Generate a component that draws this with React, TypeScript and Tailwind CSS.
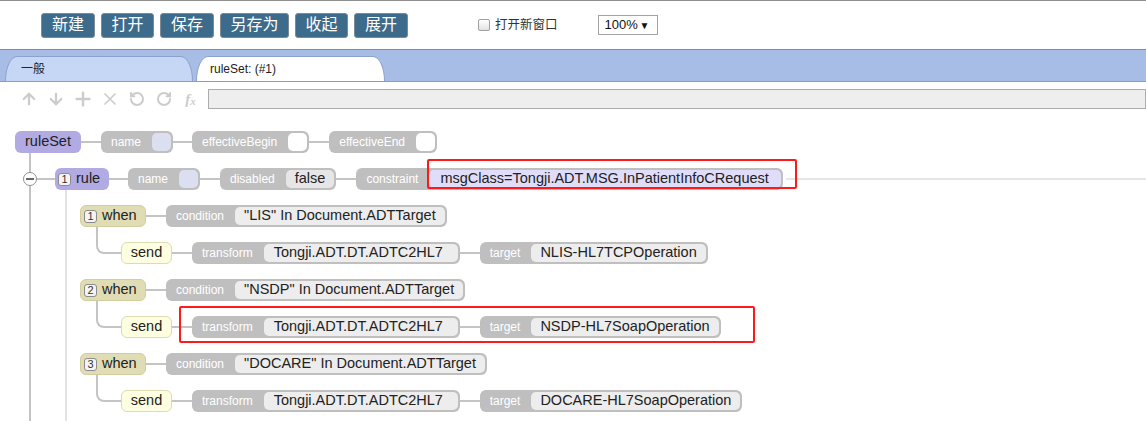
import { ArrowDown, ArrowUp, Plus, RotateCcw, RotateCw, X } from 'lucide-react'
import clsx from 'clsx'

type Tone = 'gray' | 'light' | 'lav' | 'white' | 'slate'

const toneClass: Record<Tone, string> = {
  gray: 'bg-[#ededed]',
  light: 'bg-[#e6e6e6]',
  lav: 'bg-[#e0ddfa]',
  white: 'bg-white',
  slate: 'bg-[#dcdff0]',
}

const buttons = [
  { label: '新建', w: 'w-[54px]' },
  { label: '打开', w: 'w-[53px]' },
  { label: '保存', w: 'w-[54px]' },
  { label: '另存为', w: 'w-[69px]' },
  { label: '收起', w: 'w-[53px]' },
  { label: '展开', w: 'w-[54px]' },
]

const whens = [
  { n: 1, cond: '"LIS" In Document.ADTTarget', target: 'NLIS-HL7TCPOperation' },
  { n: 2, cond: '"NSDP" In Document.ADTTarget', target: 'NSDP-HL7SoapOperation', marked: true },
  { n: 3, cond: '"DOCARE" In Document.ADTTarget', target: 'DOCARE-HL7SoapOperation' },
]

function Field({
  label,
  value,
  tone = 'gray',
  vw,
}: {
  label: string
  value?: string
  tone?: Tone
  vw?: string
}) {
  return (
    <div className="flex h-[22px] shrink-0 items-stretch rounded-[6px] bg-[#bfbfbf] p-[2px]">
      <span className="flex items-center pl-[8px] pr-[11px] text-[12px] text-white">{label}</span>
      <span
        className={clsx(
          'flex items-center whitespace-nowrap rounded-[5px] text-[14.5px] text-[#222]',
          toneClass[tone],
          value ? 'px-[9px]' : 'w-[19px]',
          vw,
        )}
      >
        {value}
      </span>
    </div>
  )
}

function Wire({ w = 'w-5' }: { w?: string }) {
  return <div className={clsx('h-[2px] shrink-0 bg-[#c4c4c4]', w)} />
}

function Badge({ n }: { n: number }) {
  return (
    <span className="flex h-[13px] w-[13px] items-center justify-center rounded-[3px] border border-[#8c8c8c] bg-[#f4f4f4] text-[11px] leading-none text-[#333]">
      {n}
    </span>
  )
}

export default function App() {
  return (
    <div className="h-[421px] w-[1146px] overflow-hidden bg-white font-['Liberation_Sans','Noto_Sans_CJK_SC',sans-serif] text-[#222]">
      {/* top bar */}
      <div className="flex h-[49px] items-center border-t border-[#8f8f8f] pl-[41px]">
        <div className="flex gap-[6px]">
          {buttons.map((b) => (
            <button
              key={b.label}
              className={clsx(
                'flex h-[25px] items-center justify-center rounded-[3px] border border-[#7d8a94] bg-[#3c6b8b] text-[16px] text-white',
                b.w,
              )}
            >
              {b.label}
            </button>
          ))}
        </div>
        <label className="ml-[70px] flex items-center gap-[5px] text-[12.5px] text-[#333]">
          <span className="h-[12px] w-[12px] rounded-[2px] border border-[#a0a0a0] bg-gradient-to-b from-white to-[#e2e2e2]" />
          打开新窗口
        </label>
        <div className="ml-[40px] flex h-[20px] w-[60px] items-center justify-between border border-[#a3a3a3] bg-white pl-[6px] pr-[7px] text-[13px] text-[#111]">
          <span>100%</span>
          <span className="text-[10px]">▼</span>
        </div>
      </div>

      {/* tabs */}
      <div className="flex h-[33px] items-end gap-[3px] border-y border-t-[#8a8a8a] border-b-[#9c9c9c] bg-[#a7bde6] pl-[5px]">
        <div className="flex h-[25px] w-[188px] items-center rounded-tl-[12px_25px] rounded-tr-[12px_25px] border border-b-0 border-[#8ca2cb] bg-[#c5d7f5] pl-[15px] text-[12px]">
          一般
        </div>
        <div className="flex h-[25px] w-[189px] items-center rounded-tl-[12px_25px] rounded-tr-[12px_25px] border border-b-0 border-[#8ca2cb] bg-white pl-[13px] text-[12px]">
          ruleSet: (#1)
        </div>
      </div>

      {/* toolbar */}
      <div className="mt-[7px] flex h-[20px] items-center pl-[15px] text-[#cccccc]">
        <span className="flex w-[27px] justify-center"><ArrowUp size={18} strokeWidth={3} /></span>
        <span className="flex w-[27px] justify-center"><ArrowDown size={18} strokeWidth={3} /></span>
        <span className="flex w-[27px] justify-center"><Plus size={22} strokeWidth={2.6} /></span>
        <span className="flex w-[27px] justify-center"><X size={20} strokeWidth={2} /></span>
        <span className="flex w-[27px] justify-center"><RotateCcw size={16} strokeWidth={3} /></span>
        <span className="flex w-[27px] justify-center"><RotateCw size={16} strokeWidth={3} /></span>
        <span className="flex w-[27px] items-end justify-center font-['Liberation_Serif',serif] text-[15px] font-bold italic leading-none">
          f<span className="text-[11px]">x</span>
        </span>
        <div className="ml-[4px] h-[20px] flex-1 border border-[#acacac] bg-[#eeeeee]" />
      </div>

      {/* tree */}
      <div className="mt-[22px] pl-[15px]">
        <div className="flex h-[22px] items-center">
          <div className="flex h-[22px] w-[66px] items-center justify-center rounded-[6px] bg-[#b1aae3] text-[14.5px]">
            ruleSet
          </div>
          <Wire />
          <Field label="name" tone="slate" />
          <Wire w="w-[19px]" />
          <Field label="effectiveBegin" tone="white" />
          <Wire />
          <Field label="effectiveEnd" tone="white" />
        </div>

        <div className="ml-[14px] border-l-2 border-[#c3c3c3] pt-[15px]">
          <div className="flex h-[22px] items-center">
            <span className="-ml-[8px] flex h-[14px] w-[14px] shrink-0 items-center justify-center rounded-full border border-[#8f8f8f] bg-white">
              <span className="h-[2px] w-[8px] bg-[#666]" />
            </span>
            <Wire w="w-[18px]" />
            <div className="flex h-[22px] w-[54px] shrink-0 items-center gap-[5px] rounded-[6px] bg-[#b1aae3] pl-[3px] text-[14.5px]">
              <Badge n={1} />
              rule
            </div>
            <Wire w="w-[19px]" />
            <Field label="name" tone="slate" />
            <Wire />
            <Field label="disabled" value="false" tone="light" />
            <Wire />
            <div className="relative shrink-0">
              <Field
                label="constraint"
                value="msgClass=Tongji.ADT.MSG.InPatientInfoCRequest"
                tone="lav"
                vw="w-[352px] pl-[11px]"
              />
              <div className="absolute -top-[9px] left-[71px] h-[30px] w-[370px] rounded-[2px] border-2 border-[#ff1a1a]" />
            </div>
            <div className="ml-[3px] h-[2px] flex-1 bg-[#e6e6e6]" />
          </div>

          <div className="ml-[34px] flex flex-col gap-[15px] border-l-2 border-[#e3e3e3] pb-[60px] pl-[13px] pt-[15px]">
            {whens.map((w) => (
              <div key={w.n} className="flex flex-col">
                <div className="flex h-[22px] items-center">
                  <div className="flex h-[22px] w-[66px] shrink-0 items-center gap-[5px] rounded-[6px] border border-[#d2ce9f] bg-[#e0dcb3] pl-[3px] text-[14.5px]">
                    <Badge n={w.n} />
                    when
                  </div>
                  <Wire />
                  <Field label="condition" value={w.cond} />
                </div>
                <div className="flex items-start">
                  <div className="ml-[16px] h-[27px] w-[25px] shrink-0 rounded-bl-[8px] border-b-2 border-l-2 border-[#c4c4c4]" />
                  <div className="mt-[15px] flex h-[22px] items-center">
                    <div className="flex h-[22px] w-[51px] shrink-0 items-center justify-center rounded-[6px] border border-[#dcdcb0] bg-[#fefee0] text-[14.5px]">
                      send
                    </div>
                    <Wire />
                    <div className="relative flex items-center">
                      <Field label="transform" value="Tongji.ADT.DT.ADTC2HL7" vw="w-[194px] pl-[10px]" />
                      <Wire />
                      <Field label="target" value={w.target} />
                      {w.marked ? (
                        <div className="absolute -left-[13px] -top-[10px] h-[37px] w-[576px] rounded-[2px] border-2 border-[#ff1a1a]" />
                      ) : null}
                    </div>
                  </div>
                </div>
              </div>
            ))}
          </div>
        </div>
      </div>
    </div>
  )
}
